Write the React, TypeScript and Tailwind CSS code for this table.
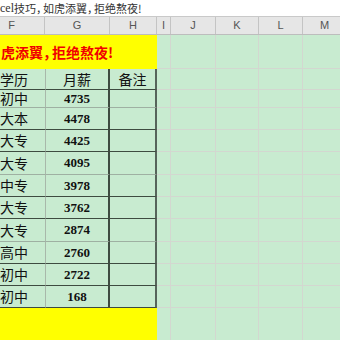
import React from "react";

const DARK = "border-[#3e4b40]";
const LIGHT = "border-[#9fb0a2]";

const rows: { edu: string; pay: string; h: string; b: string }[] = [
  { edu: "初中", pay: "4735", h: "h-[18px]", b: LIGHT },
  { edu: "大本", pay: "4478", h: "h-[22px]", b: DARK },
  { edu: "大专", pay: "4425", h: "h-[22px]", b: DARK },
  { edu: "大专", pay: "4095", h: "h-[23px]", b: LIGHT },
  { edu: "中专", pay: "3978", h: "h-[22px]", b: DARK },
  { edu: "大专", pay: "3762", h: "h-[22px]", b: DARK },
  { edu: "大专", pay: "2874", h: "h-[23px]", b: LIGHT },
  { edu: "高中", pay: "2760", h: "h-[22px]", b: DARK },
  { edu: "初中", pay: "2722", h: "h-[22px]", b: DARK },
  { edu: "初中", pay: "168", h: "h-[22px]", b: DARK },
];

const greenW = ["w-[14px]", "w-[45px]", "w-[43px]", "w-[44px]", "w-[44px]"];

function GreenCells({ bottom = true }: { bottom?: boolean }) {
  return (
    <>
      {greenW.map((w, i) => (
        <div
          key={i}
          className={`${w} shrink-0 h-full border-r border-[#d3d7d0] ${bottom ? "border-b" : ""}`}
        />
      ))}
    </>
  );
}

const cjk = "font-['Noto_Sans_CJK_SC',sans-serif]";

export default function App() {
  return (
    <div className="w-[340px] h-[340px] overflow-hidden bg-[#c8ebd0] flex flex-col">
      {/* formula bar */}
      <div className="h-[17px] shrink-0 bg-white border-b border-[#c9c9c9] flex items-center text-[11px] leading-none text-[#333] whitespace-nowrap">
        <span className="font-['Liberation_Serif',serif] text-[12px]">cel</span>
        <span className={cjk}>
          技巧<span className="tracking-[-4px]">，</span>如虎添翼<span className="tracking-[-4px]">，</span>拒绝熬夜!
        </span>
      </div>
      {/* column headers */}
      <div className="h-[18px] shrink-0 bg-[#e6e6e6] border-b border-[#bdbdbd] ml-[-21px] flex text-[11px] text-[#555] font-['Liberation_Sans',sans-serif]">
        {[
          ["F", "w-[66px]"],
          ["G", "w-[65px]"],
          ["H", "w-[47px]"],
          ["I", "w-[14px]"],
          ["J", "w-[45px]"],
          ["K", "w-[43px]"],
          ["L", "w-[44px]"],
          ["M", "w-[44px]"],
        ].map(([l, w]) => (
          <div
            key={l}
            className={`${w} shrink-0 border-r border-[#c4c4c4] flex items-center justify-center`}
          >
            {l}
          </div>
        ))}
      </div>
      {/* title row */}
      <div className="h-[34px] shrink-0 ml-[-21px] flex">
        <div className="w-[178px] shrink-0 h-full bg-[#ffff00] flex items-center pl-[22px]">
          <span className={`${cjk} font-bold text-[14px] text-[#f00000] whitespace-nowrap leading-none`}>
            虎添翼<span className="tracking-[-5px]">，</span>拒绝熬夜!
          </span>
        </div>
        <GreenCells />
      </div>
      {/* header row */}
      <div className="h-[21px] shrink-0 ml-[-21px] flex">
        <div className={`w-[66px] shrink-0 h-full border-b ${DARK} pl-[4px] flex items-center justify-center ${cjk} text-[14px] text-[#111]`}>
          学历
        </div>
        <div className={`w-[65px] shrink-0 h-full border-b ${DARK} border-l border-l-[#a8b8aa] border-r-2 border-r-[#3e4b40] flex items-center justify-center ${cjk} text-[14px] text-[#111]`}>
          月薪
        </div>
        <div className={`w-[47px] shrink-0 h-full border-b ${DARK} border-r-2 border-r-[#56645a] flex items-center justify-center ${cjk} text-[14px] text-[#111]`}>
          备注
        </div>
        <GreenCells />
      </div>
      {rows.map((r, i) => (
        <div key={i} className={`${r.h} shrink-0 ml-[-21px] flex`}>
          <div className={`w-[66px] shrink-0 h-full border-b ${r.b} pl-[4px] flex items-center justify-center ${cjk} text-[14px] text-[#111]`}>
            {r.edu}
          </div>
          <div className={`w-[65px] shrink-0 h-full border-b ${r.b} border-l border-l-[#a8b8aa] border-r-2 border-r-[#3e4b40] flex items-center justify-center font-['Liberation_Serif',serif] font-bold text-[13px] text-[#111]`}>
            {r.pay}
          </div>
          <div className={`w-[47px] shrink-0 h-full border-b ${r.b} border-r-2 border-r-[#56645a]`} />
          <GreenCells />
        </div>
      ))}
      {/* bottom yellow row */}
      <div className="flex-1 ml-[-21px] flex">
        <div className="w-[178px] shrink-0 h-full bg-[#ffff00]" />
        <GreenCells bottom={false} />
      </div>
    </div>
  );
}
